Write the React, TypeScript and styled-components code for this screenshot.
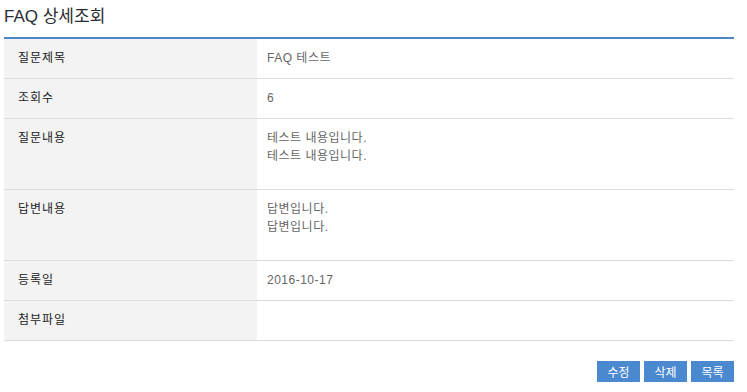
import styled, { createGlobalStyle } from "styled-components";

const GlobalStyle = createGlobalStyle`
  html, body {
    margin: 0;
    padding: 0;
    background: #fff;
  }
  body {
    font-family: "Liberation Sans", "Noto Sans CJK KR", sans-serif;
  }
`;

type Row = { label: string; lines: string[]; tall?: boolean };

const rows: Row[] = [
  { label: "질문제목", lines: ["FAQ 테스트"] },
  { label: "조회수", lines: ["6"] },
  { label: "질문내용", lines: ["테스트 내용입니다.", "테스트 내용입니다."], tall: true },
  { label: "답변내용", lines: ["답변입니다.", "답변입니다."], tall: true },
  { label: "등록일", lines: ["2016-10-17"] },
  { label: "첨부파일", lines: [] },
];

export default function App() {
  return (
    <>
      <GlobalStyle />
      <Page>
        <Title>FAQ 상세조회</Title>
        <Table>
          {rows.map(row => (
            <TableRow key={row.label}>
              <Label $tall={row.tall}>{row.label}</Label>
              <Value $tall={row.tall}>
                {row.lines.map((line, i) => (
                  <div key={i}>{line}</div>
                ))}
              </Value>
            </TableRow>
          ))}
        </Table>
        <Buttons>
          <Button>수정</Button>
          <Button>삭제</Button>
          <Button>목록</Button>
        </Buttons>
      </Page>
    </>
  );
}

const Page = styled.div`
  width: 730px;
  padding: 0 4px;
`;

const Title = styled.h2`
  margin: 0;
  height: 37px;
  box-sizing: border-box;
  padding-top: 6px;
  font-size: 17px;
  line-height: 22px;
  font-weight: normal;
  color: #2b2b33;
`;

const Table = styled.div`
  border-top: 2px solid #4a86c8;
`;

const TableRow = styled.div`
  display: grid;
  grid-template-columns: 253px 1fr;
  border-bottom: 1px solid #dcdcdc;
`;

const Cell = styled.div<{ $tall?: boolean }>`
  box-sizing: border-box;
  min-height: ${({ $tall }) => ($tall ? "70px" : "39px")};
  padding: 10px 14px 11px;
  font-size: 12px;
  line-height: 18px;
`;

const Label = styled(Cell)`
  background: #f3f3f3;
  color: #222;
  letter-spacing: 1px;
`;

const Value = styled(Cell)`
  padding-left: 10px;
  color: #666;
  letter-spacing: 0.5px;
`;

const Buttons = styled.div`
  display: flex;
  justify-content: flex-end;
  gap: 4px;
  margin-top: 20px;
`;

const Button = styled.button`
  width: 43px;
  height: 21px;
  padding: 0;
  border: none;
  background: #4a88d0;
  color: #fff;
  font-family: "Noto Sans CJK KR", sans-serif;
  font-size: 12px;
  line-height: 21px;
  cursor: pointer;
`;
